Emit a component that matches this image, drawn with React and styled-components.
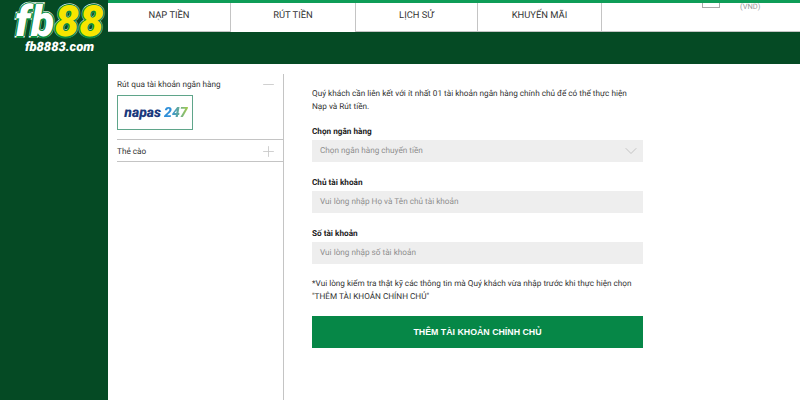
import React from "react";
import styled, { createGlobalStyle } from "styled-components";
import { FiChevronDown, FiMinus, FiPlus } from "react-icons/fi";

const colors = {
  dark: "#054a24",
  stripe: "#0f9d58",
  button: "#068747",
  field: "#eeeeee",
  line: "#c4c4c4",
  text: "#333333",
  muted: "#8f8f8f",
};

const Global = createGlobalStyle`
  html, body { margin: 0; padding: 0; background: #fff; }
  * { box-sizing: border-box; }
  body {
    font-family: Roboto, "Liberation Sans", sans-serif;
    text-rendering: geometricPrecision;
  }
`;

const Page = styled.div`
  display: grid;
  grid-template-columns: 108px 1fr;
  width: 800px;
  height: 400px;
  overflow: hidden;
  background: ${colors.dark};
`;

const Side = styled.aside`
  display: flex;
  flex-direction: column;
  align-items: center;
  padding: 2px 0 0 11px;
`;

const Logo = styled.div`
  font-family: Roboto, "Liberation Sans", sans-serif;
  font-size: 43px;
  line-height: 40px;
  font-weight: 900;
  font-style: italic;
  letter-spacing: 0.5px;
  white-space: nowrap;
  color: #fff;
  -webkit-text-stroke: 3px #fff;
  paint-order: stroke fill;
  text-shadow: 1.5px 0 #0c8a3e, -1.5px 0 #0c8a3e, 0 1.5px #0c8a3e, 0 -1.5px #0c8a3e;
  span {
    color: #f6e500;
  }
`;

const LogoSite = styled.div`
  font-family: Roboto, "Liberation Sans", sans-serif;
  font-size: 13px;
  line-height: 12px;
  font-weight: 900;
  font-style: italic;
  color: #fff;
`;

const Main = styled.main`
  display: flex;
  flex-direction: column;
  min-width: 0;
`;

const Stripe = styled.div`
  height: 3px;
  background: ${colors.stripe};
`;

const Tabs = styled.nav`
  display: flex;
  height: 29px;
  background: #fff;
  border-bottom: 1px solid ${colors.line};
`;

const Tab = styled.div`
  width: ${(p) => p.$w}px;
  display: flex;
  align-items: center;
  justify-content: center;
  padding-bottom: 4px;
  margin-bottom: ${(p) => (p.$active ? "-1px" : "0")};
  border-right: 1px solid ${colors.line};
  background: #fff;
  font-size: 9.4px;
  color: ${colors.text};
`;

const Account = styled.div`
  flex: 1;
  display: flex;
  align-items: flex-start;
  padding-left: 100px;
  gap: 20px;
`;

const Wallet = styled.div`
  width: 18px;
  height: 5px;
  border: 1px solid #aaa;
  border-top: 0;
`;

const Currency = styled.div`
  font-size: 7.5px;
  line-height: 8px;
  color: #999;
`;

const Band = styled.div`
  height: 32px;
`;

const Content = styled.div`
  flex: 1;
  display: flex;
  padding: 10px 0 0 9px;
  background: #fff;
`;

const Methods = styled.div`
  width: 167px;
  border-right: 1px solid ${colors.line};
`;

const MethodHead = styled.div`
  display: flex;
  align-items: center;
  justify-content: space-between;
  height: 21px;
  padding: ${(p) => p.$pt || 0}px 6px 0 0;
  font-size: 8.2px;
  color: ${colors.text};
  svg {
    color: #c8c8c8;
    stroke-width: 1.2;
  }
`;

const Method = styled.div`
  padding-bottom: ${(p) => p.$pb}px;
  border-bottom: 1px solid ${colors.line};
`;

const Napas = styled.div`
  width: 76px;
  height: 35px;
  display: flex;
  align-items: center;
  justify-content: center;
  padding-left: 2px;
  border: 1px solid #5fa58a;
  font-family: Roboto, "Liberation Sans", sans-serif;
  font-size: 14px;
  font-weight: 900;
  font-style: italic;
  color: #1b3a7d;
  span {
    margin-left: 3px;
    background: linear-gradient(90deg, #2f8fd8 30%, #a6cc4a);
    -webkit-background-clip: text;
    background-clip: text;
    color: transparent;
  }
`;

const Form = styled.div`
  width: 359px;
  padding: 14px 0 0 28px;
`;

const Note = styled.p`
  margin: ${(p) => p.$m};
  font-size: 8.2px;
  line-height: 13px;
  white-space: nowrap;
  color: ${colors.text};
`;

const Label = styled.div`
  margin: 0 0 2px;
  font-size: 8.2px;
  line-height: 12px;
  font-weight: 700;
  color: #222;
`;

const Field = styled.div`
  display: flex;
  align-items: center;
  justify-content: space-between;
  height: 22px;
  margin-bottom: 15px;
  padding: 0 2px 0 8px;
  background: ${colors.field};
  font-size: 8.2px;
  color: ${colors.muted};
  svg {
    color: #c4c4c4;
    stroke-width: 1.2;
  }
`;

const Submit = styled.button`
  display: block;
  width: 100%;
  height: 32px;
  border: 0;
  background: ${colors.button};
  color: #fff;
  font-family: "Liberation Sans", sans-serif;
  font-size: 8.8px;
  font-weight: 700;
`;

const tabs = [
  { label: "NẠP TIỀN", w: 123 },
  { label: "RÚT TIỀN", w: 125, active: true },
  { label: "LỊCH SỬ", w: 122 },
  { label: "KHUYẾN MÃI", w: 124 },
];

const fields = [
  { label: "Chọn ngân hàng", hint: "Chọn ngân hàng chuyển tiền", select: true },
  { label: "Chủ tài khoản", hint: "Vui lòng nhập Họ và Tên chủ tài khoản" },
  { label: "Số tài khoản", hint: "Vui lòng nhập số tài khoản" },
];

export default function App() {
  return (
    <Page>
      <Global />
      <Side>
        <Logo>
          fb<span>88</span>
        </Logo>
        <LogoSite>fb8883.com</LogoSite>
      </Side>
      <Main>
        <Stripe />
        <Tabs>
          {tabs.map((t) => (
            <Tab key={t.label} $w={t.w} $active={t.active}>
              {t.label}
            </Tab>
          ))}
          <Account>
            <Wallet />
            <Currency>(VND)</Currency>
          </Account>
        </Tabs>
        <Band />
        <Content>
          <Methods>
            <Method $pb={9}>
              <MethodHead>
                Rút qua tài khoản ngân hàng
                <FiMinus size={17} />
              </MethodHead>
              <Napas>
                napas<span>247</span>
              </Napas>
            </Method>
            <Method $pb={0}>
              <MethodHead $pt={2}>
                Thẻ cào
                <FiPlus size={17} />
              </MethodHead>
            </Method>
          </Methods>
          <Form>
            <Note $m="0 0 12px">
              Quý khách cần liên kết với ít nhất 01 tài khoản ngân hàng chính chủ để có thể thực hiện
              <br />
              Nạp và Rút tiền.
            </Note>
            {fields.map((f) => (
              <div key={f.label}>
                <Label>{f.label}</Label>
                <Field>
                  {f.hint}
                  {f.select && <FiChevronDown size={20} />}
                </Field>
              </div>
            ))}
            <Note $m="-1px 0 12px">
              *Vui lòng kiểm tra thật kỹ các thông tin mà Quý khách vừa nhập trước khi thực hiện chọn
              <br />
              "THÊM TÀI KHOẢN CHÍNH CHỦ"
            </Note>
            <Submit>THÊM TÀI KHOẢN CHÍNH CHỦ</Submit>
          </Form>
        </Content>
      </Main>
    </Page>
  );
}
